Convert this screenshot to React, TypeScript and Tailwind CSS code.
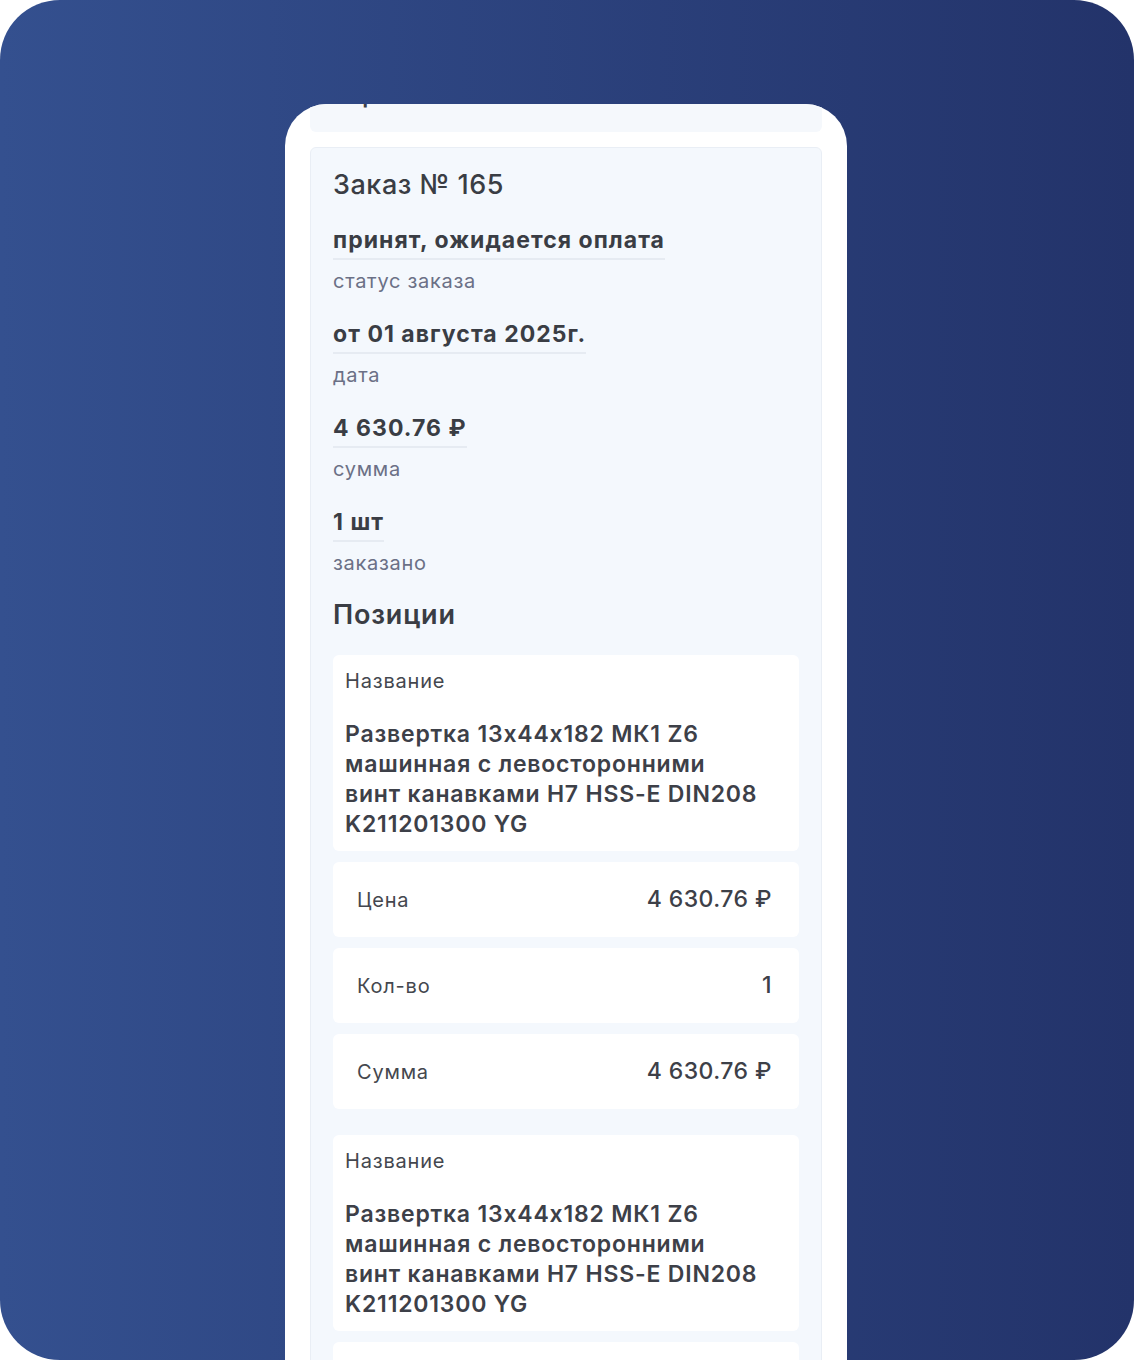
const font = { fontFamily: 'Inter, "Noto Sans", sans-serif', fontFeatureSettings: '"calt" 0' };

const fields = [
  { value: 'принят, ожидается оплата', label: 'статус заказа' },
  { value: 'от 01 августа 2025г.', label: 'дата' },
  { value: '4 630.76 ₽', label: 'сумма' },
  { value: '1 шт', label: 'заказано' },
];

const itemName = [
  'Развертка 13x44x182 МК1 Z6',
  'машинная с левосторонними',
  'винт канавками H7 HSS-E DIN208',
  'K211201300 YG',
];

function Row({ label, value }: { label: string; value: string }) {
  return (
    <div className="flex h-[75px] items-center justify-between rounded-md bg-white pl-[24px] pr-[27px]">
      <span className="text-[20px] tracking-[0.04em] text-[#44474e]">{label}</span>
      <span className="text-[23px] font-medium tracking-[0.02em] text-[#3d4048]">{value}</span>
    </div>
  );
}

function Position() {
  return (
    <div className="flex flex-col gap-[11px]">
      <div className="rounded-md bg-white pb-[12px] pl-[12px] pr-[16px] pt-[14px]">
        <p className="text-[20px] leading-[24px] tracking-[0.04em] text-[#44474e]">Название</p>
        <p className="mt-[26px] text-[23px] font-semibold leading-[30px] tracking-[0.035em] text-[#3d4048]">
          {itemName.map((line) => (
            <span key={line} className="block whitespace-nowrap">{line}</span>
          ))}
        </p>
      </div>
      <Row label="Цена" value="4 630.76 ₽" />
      <Row label="Кол-во" value="1" />
      <Row label="Сумма" value="4 630.76 ₽" />
    </div>
  );
}

export default function App() {
  return (
    <div style={font} className="h-[1360px] w-[1134px] overflow-hidden rounded-[60px] bg-gradient-to-r from-[#34508f] to-[#23336a]">
      <div className="ml-[285px] mt-[104px] h-[1300px] w-[562px] overflow-hidden rounded-t-[42px] bg-white px-[25px]">
        {/* previous block, scrolled off */}
        <div className="h-[28px] overflow-hidden rounded-b-md bg-[#f5f8fc]">
          <p className="-mt-[23px] pl-[23px] text-[23px] font-semibold leading-[28px] text-[#3d4048]">Корзина</p>
        </div>

        <div className="mt-[15px] rounded-t-md border border-[#e9eef5] bg-[#f4f8fd] px-[22px] pt-[21px]">
          <h1 className="text-[27px] font-medium leading-[32px] tracking-[0.02em] text-[#3a3d44]">Заказ № 165</h1>

          <div className="mt-[25px] flex flex-col gap-[27px]">
            {fields.map((f) => (
              <div key={f.label}>
                <p className="inline-block border-b-2 border-[#e6ebf2] pb-[4px] text-[23px] font-bold leading-[28px] tracking-[0.045em] text-[#3a3d44]">{f.value}</p>
                <p className="mt-[9px] text-[20px] leading-[24px] tracking-[0.035em] text-[#6b7086]">{f.label}</p>
              </div>
            ))}
          </div>

          <h2 className="mt-[24px] text-[27px] font-semibold leading-[32px] tracking-[0.03em] text-[#3a3d44]">Позиции</h2>

          <div className="mt-[24px] flex flex-col gap-[26px]">
            <Position />
            <Position />
          </div>
        </div>
      </div>
    </div>
  );
}
